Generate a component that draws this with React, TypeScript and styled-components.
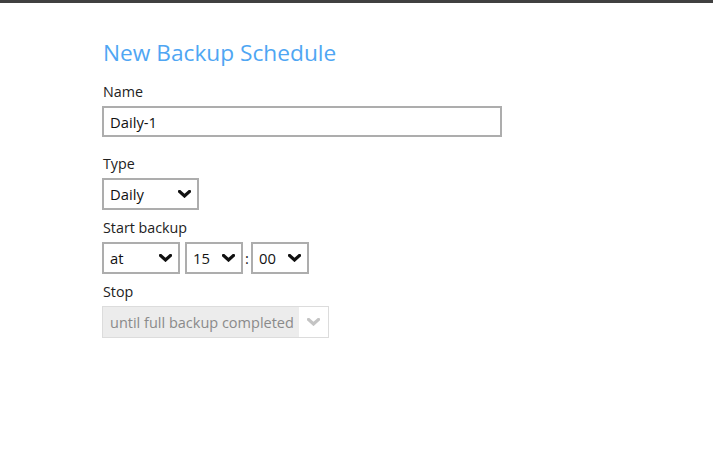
import React, { useState } from 'react'
import styled, { createGlobalStyle } from 'styled-components'

const GlobalStyle = createGlobalStyle`
  html, body {
    margin: 0;
    padding: 0;
    background: #fff;
  }
  body {
    font-family: "Open Sans", "Liberation Sans", sans-serif;
    color: #222;
  }
`

const Page = styled.div`
  width: 713px;
  height: 467px;
  border-top: 3px solid #404040;
  box-sizing: border-box;
  padding: 33px 0 0 102px;
`

const Title = styled.h1`
  margin: 0 0 12px 1px;
  font-size: 22.7px;
  line-height: 34px;
  font-weight: 400;
  color: #4fa6f3;
`

const Field = styled.div<{ $gap?: number }>`
  display: flex;
  flex-direction: column;
  align-items: flex-start;
  margin-bottom: ${p => p.$gap ?? 8}px;
`

const Label = styled.label`
  font-size: 14.3px;
  line-height: 20px;
  color: #222;
  margin: 0 0 4px 1px;
`

const TextInput = styled.input`
  width: 400px;
  height: 31px;
  box-sizing: border-box;
  border: 2px solid #adadad;
  padding: 0 6px;
  font-family: inherit;
  font-size: 14.8px;
  color: #111;
  outline: none;
`

const Row = styled.div`
  display: flex;
  align-items: center;
`

const Colon = styled.span`
  width: 8px;
  text-align: center;
  font-size: 14.8px;
  color: #222;
`

const SelectBox = styled.div<{ $width: number; $disabled?: boolean }>`
  width: ${p => p.$width}px;
  height: 32px;
  box-sizing: border-box;
  display: flex;
  align-items: center;
  border: ${p => (p.$disabled ? '1px solid #dcdcdc' : '2px solid #adadad')};
  background: ${p => (p.$disabled ? '#ececec' : '#fff')};
  font-size: ${p => (p.$disabled ? 14.5 : 14.8)}px;
  color: ${p => (p.$disabled ? '#8a8a8a' : '#111')};
  cursor: ${p => (p.$disabled ? 'default' : 'pointer')};
`

const SelectText = styled.span<{ $disabled?: boolean }>`
  flex: 1;
  padding-left: ${p => (p.$disabled ? 7 : 6)}px;
  white-space: nowrap;
`

const ArrowCell = styled.span<{ $disabled?: boolean }>`
  align-self: stretch;
  width: ${p => (p.$disabled ? 29 : 26)}px;
  display: flex;
  align-items: center;
  justify-content: center;
  background: ${p => (p.$disabled ? '#fff' : 'transparent')};
`

const Spacer = styled.span`
  width: 5px;
`

const Chevron = ({ color }: { color: string }) => (
  <svg width="13" height="8" viewBox="0 0 13 8">
    <path d="M1.5 1.5 L6.5 6 L11.5 1.5" fill="none" stroke={color} strokeWidth="3.2" strokeLinecap="square" />
  </svg>
)

const Select = ({ value, width, disabled }: { value: string; width: number; disabled?: boolean }) => (
  <SelectBox $width={width} $disabled={disabled}>
    <SelectText $disabled={disabled}>{value}</SelectText>
    <ArrowCell $disabled={disabled}>
      <Chevron color={disabled ? '#c4c4c4' : '#111'} />
    </ArrowCell>
  </SelectBox>
)

export default function App() {
  const [name, setName] = useState('Daily-1')

  return (
    <>
      <GlobalStyle />
      <Page>
        <Title>New Backup Schedule</Title>
        <Field $gap={17}>
          <Label>Name</Label>
          <TextInput value={name} onChange={e => setName(e.target.value)} />
        </Field>
        <Field>
          <Label>Type</Label>
          <Select value="Daily" width={97} />
        </Field>
        <Field>
          <Label>Start backup</Label>
          <Row>
            <Select value="at" width={78} />
            <Spacer />
            <Select value="15" width={58} />
            <Colon>:</Colon>
            <Select value="00" width={58} />
          </Row>
        </Field>
        <Field>
          <Label>Stop</Label>
          <Select value="until full backup completed" width={227} disabled />
        </Field>
      </Page>
    </>
  )
}
